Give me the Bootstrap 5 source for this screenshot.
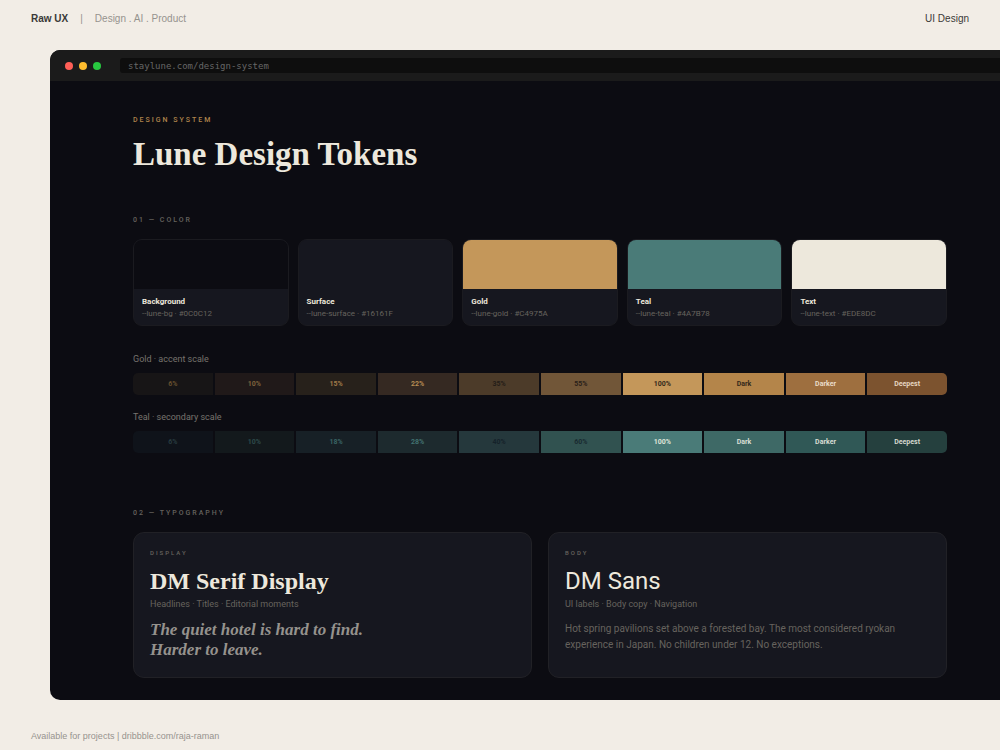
<!DOCTYPE html>
<html lang="en">
<head>
<meta charset="utf-8">
<meta name="viewport" content="width=device-width, initial-scale=1">
<title>Lune Design Tokens</title>
<link rel="stylesheet" href="https://cdn.jsdelivr.net/npm/bootstrap@5.3.0/dist/css/bootstrap.min.css">
<style>
:root {
  --lune-bg: #0c0c12;
  --lune-surface: #16171f;
  --lune-text: #ede8dc;
  --lune-muted: #66635e;
  --lune-line: #212126;
}
body { background: #f2ede6; color: #3a3937; font: 10px/16px "Liberation Sans", Arial, sans-serif; }
.page-head { padding: 11px 31px 23px; }
.page-foot { padding: 28px 31px 6px; font-size: 9px; }
.quiet { color: #96938e; }
.quiet a { color: inherit; text-decoration: none; }
.browser { margin-left: 50px; background: var(--lune-bg); border-radius: 10px 0 0 10px; font-family: Roboto, sans-serif; }
.chrome { background: #1b1b1b; padding: 8px 0 8px 15px; }
.lights { gap: 6px; }
.light { width: 8px; height: 8px; border-radius: 50%; }
.address { background: #0e0e0e; border: 0; border-radius: 3px 0 0 3px; color: #666; height: 15px; padding: 1px 8px 0; margin-left: 19px; font: 9px/14px "DejaVu Sans Mono", monospace; }
.sheet { padding: 33px 53px 22px 83px; }
.overline { font-size: 7px; line-height: 12px; font-weight: 500; letter-spacing: 2px; color: var(--lune-muted); margin: 0; }
.overline-gold { color: #b0844c; }
.display-face { font-family: "Liberation Serif", serif; font-weight: 700; color: var(--lune-text); margin: 0; }
.sheet-title { font-size: 33px; line-height: 40px; margin-top: 8px; }
.color-part { margin-top: 40px; }
.type-part { margin-top: 54px; }
.swatches { gap: 9px; margin-top: 13px; }
.swatch { flex: 1 1 0; min-width: 0; background: var(--lune-surface); border: 1px solid #1b1b20; border-radius: 9px; overflow: hidden; }
.chip { height: 49px; }
.swatch-text { padding: 7px 8px 5px; font-size: 8px; line-height: 12px; }
.swatch-name { color: var(--lune-text); font-weight: 700; }
.token { color: var(--lune-muted); }
.caption-line { font-size: 9px; line-height: 14px; color: #77736d; }
.token-line { color: var(--lune-muted); }
.scale-gold { margin-top: 26px; }
.scale-teal { margin-top: 15px; }
.scale { gap: 2px; margin-top: 7px; border-radius: 5px; overflow: hidden; }
.step { flex: 1 1 0; font-size: 7px; line-height: 22px; font-weight: 700; text-align: center; }
.specimens { gap: 16px; margin-top: 13px; }
.specimen { flex: 1 1 0; min-width: 0; background: var(--lune-surface); border: 1px solid var(--lune-line); border-radius: 11px; padding: 14px 16px 17px; }
.specimen .overline { font-size: 6px; }
.specimen-name { font-size: 24px; line-height: 32px; margin: 6px 0 0; }
.sans-face { font-family: Roboto, sans-serif; font-weight: 400; color: var(--lune-text); }
.quote { font: italic 700 17px/20px "Liberation Serif", serif; color: #95928d; margin: 9px 0 0; }
.copy { font-size: 10px; color: var(--lune-muted); margin: 10px 0 0; }
</style>
</head>
<body class="d-flex flex-column min-vh-100">
<header class="page-head d-flex justify-content-between">
  <div class="d-flex gap-2"><strong>Raw UX</strong><span class="quiet px-1">|</span><span class="quiet">Design . AI . Product</span></div>
  <span>UI Design</span>
</header>

<main class="browser flex-grow-1 overflow-hidden">
  <div class="chrome d-flex align-items-center">
    <div class="lights d-flex">
      <span class="light" style="background:#ff5f57"></span>
      <span class="light" style="background:#febc2e"></span>
      <span class="light" style="background:#28c840"></span>
    </div>
    <input class="address flex-grow-1" type="text" aria-label="Address" value="staylune.com/design-system">
  </div>

  <div class="sheet">
    <p class="overline overline-gold">DESIGN SYSTEM</p>
    <h1 class="display-face sheet-title">Lune Design Tokens</h1>

    <section class="color-part">
      <h2 class="overline">01 — COLOR</h2>
      <div class="swatches d-flex">
        <div class="swatch"><div class="chip" style="background:#0c0c12"></div><div class="swatch-text"><div class="swatch-name">Background</div><div class="token">--lune-bg · #0C0C12</div></div></div>
        <div class="swatch"><div class="chip" style="background:#16171f"></div><div class="swatch-text"><div class="swatch-name">Surface</div><div class="token">--lune-surface · #16161F</div></div></div>
        <div class="swatch"><div class="chip" style="background:#c4975a"></div><div class="swatch-text"><div class="swatch-name">Gold</div><div class="token">--lune-gold · #C4975A</div></div></div>
        <div class="swatch"><div class="chip" style="background:#4a7b78"></div><div class="swatch-text"><div class="swatch-name">Teal</div><div class="token">--lune-teal · #4A7B78</div></div></div>
        <div class="swatch"><div class="chip" style="background:#ede8dc"></div><div class="swatch-text"><div class="swatch-name">Text</div><div class="token">--lune-text · #EDE8DC</div></div></div>
      </div>

      <div class="caption-line scale-gold">Gold · accent scale</div>
      <div class="scale d-flex">
        <div class="step" style="background:#171516;color:#66502f">6%</div>
        <div class="step" style="background:#201919;color:#7e623c">10%</div>
        <div class="step" style="background:#27211b;color:#a07a48">15%</div>
        <div class="step" style="background:#352922;color:#b78c53">22%</div>
        <div class="step" style="background:#4c3b29;color:#241d18">35%</div>
        <div class="step" style="background:#715638;color:#2a2018">55%</div>
        <div class="step" style="background:#c4975a;color:#34291b">100%</div>
        <div class="step" style="background:#b4854a;color:#34291b">Dark</div>
        <div class="step" style="background:#9e6f3f;color:#eadcc8">Darker</div>
        <div class="step" style="background:#7c532f;color:#e5d6c1">Deepest</div>
      </div>

      <div class="caption-line scale-teal">Teal · secondary scale</div>
      <div class="scale d-flex">
        <div class="step" style="background:#0f131a;color:#283b40">6%</div>
        <div class="step" style="background:#13191c;color:#2d4a4a">10%</div>
        <div class="step" style="background:#172026;color:#3a6364">18%</div>
        <div class="step" style="background:#1d2a2e;color:#427170">28%</div>
        <div class="step" style="background:#25383c;color:#15222a">40%</div>
        <div class="step" style="background:#315250;color:#192b30">60%</div>
        <div class="step" style="background:#4a7b78;color:#dfe4d9">100%</div>
        <div class="step" style="background:#3e6966;color:#d8ded4">Dark</div>
        <div class="step" style="background:#305856;color:#d8ddd3">Darker</div>
        <div class="step" style="background:#25403e;color:#d5d8ce">Deepest</div>
      </div>
    </section>

    <section class="type-part">
      <h2 class="overline">02 — TYPOGRAPHY</h2>
      <div class="specimens d-flex">
        <article class="specimen">
          <p class="overline">DISPLAY</p>
          <h3 class="display-face specimen-name">DM Serif Display</h3>
          <div class="caption-line token-line">Headlines · Titles · Editorial moments</div>
          <p class="quote">The quiet hotel is hard to find.<br>Harder to leave.</p>
        </article>
        <article class="specimen">
          <p class="overline">BODY</p>
          <h3 class="sans-face specimen-name">DM Sans</h3>
          <div class="caption-line token-line">UI labels · Body copy · Navigation</div>
          <p class="copy">Hot spring pavilions set above a forested bay. The most considered ryokan experience in Japan. No children under 12. No exceptions.</p>
        </article>
      </div>
    </section>
  </div>
</main>

<footer class="page-foot quiet">Available for projects | <a href="#">dribbble.com/raja-raman</a></footer>
<script src="https://cdn.jsdelivr.net/npm/bootstrap@5.3.0/dist/js/bootstrap.bundle.min.js"></script>
</body>
</html>
